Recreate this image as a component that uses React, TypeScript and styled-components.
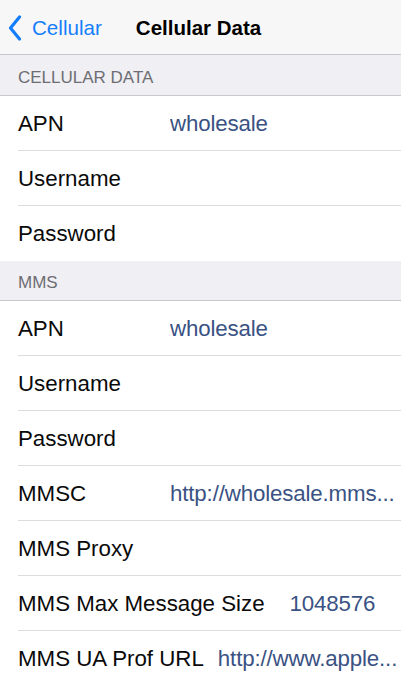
import React from "react";
import styled, { createGlobalStyle } from "styled-components";

const GlobalStyle = createGlobalStyle`
  html, body {
    margin: 0;
    padding: 0;
    background: #ffffff;
  }
  body {
    font-family: "Liberation Sans", Arial, sans-serif;
    -webkit-font-smoothing: antialiased;
  }
`;

const Screen = styled.div`
  width: 401px;
  height: 684px;
  overflow: hidden;
  background: #ffffff;
  display: flex;
  flex-direction: column;
`;

const NavBar = styled.div`
  height: 54px;
  flex-shrink: 0;
  background: #f7f7f7;
  border-bottom: 1px solid #c8c7cc;
  display: flex;
  align-items: center;
  box-sizing: content-box;
`;

const BackButton = styled.div`
  display: flex;
  align-items: center;
  color: #157efb;
  font-size: 20.6px;
  padding-left: 8px;
  gap: 10px;
  margin-top: 1px;
`;

const Title = styled.div`
  font-size: 20.5px;
  font-weight: bold;
  color: #000000;
  margin-left: 34px;
  margin-top: 1px;
`;

const SectionHeader = styled.div<{ $height: number }>`
  height: ${(p) => p.$height}px;
  flex-shrink: 0;
  background: #efeff4;
  border-bottom: 1px solid #c8c7cc;
  color: #6d6d72;
  font-size: 17px;
  padding: 5px 0 0 18px;
  display: flex;
  align-items: center;
  box-sizing: border-box;
`;

const Row = styled.div`
  height: 55px;
  flex-shrink: 0;
  display: flex;
  align-items: center;
  padding-left: 18px;
  position: relative;
  box-sizing: border-box;
  &:not(:last-child)::after {
    content: "";
    position: absolute;
    left: 18px;
    right: 0;
    bottom: 0;
    height: 1px;
    background: #dcdbe0;
  }
`;

const Label = styled.div<{ $gap: number }>`
  font-size: 22.3px;
  color: #0a0a0a;
  min-width: 152px;
  margin-right: ${(p) => p.$gap}px;
  white-space: nowrap;
  flex-shrink: 0;
`;

const Value = styled.div`
  font-size: 22.3px;
  color: #3a5283;
  white-space: nowrap;
  overflow: hidden;
  min-width: 0;
  letter-spacing: -0.15px;
`;

const Group = styled.div`
  display: flex;
  flex-direction: column;
`;

type Field = { label: string; value?: string; gap?: number };

const cellular: Field[] = [
  { label: "APN", value: "wholesale" },
  { label: "Username" },
  { label: "Password" },
];

const mms: Field[] = [
  { label: "APN", value: "wholesale" },
  { label: "Username" },
  { label: "Password" },
  { label: "MMSC", value: "http://wholesale.mms..." },
  { label: "MMS Proxy" },
  { label: "MMS Max Message Size", value: "1048576", gap: 25 },
  { label: "MMS UA Prof URL", value: "http://www.apple...", gap: 14 },
];

const Chevron = () => (
  <svg width="14" height="26" viewBox="0 0 14 26">
    <path d="M11.5 2 L2.5 13 L11.5 24" fill="none" stroke="#157efb" strokeWidth="3.2" strokeLinecap="round" strokeLinejoin="round" />
  </svg>
);

const FieldList = ({ fields }: { fields: Field[] }) => (
  <Group>
    {fields.map((f, i) => (
      <Row key={i}>
        <Label $gap={f.gap ?? 0}>{f.label}</Label>
        {f.value && <Value>{f.value}</Value>}
      </Row>
    ))}
  </Group>
);

const App: React.FC = () => (
  <Screen>
    <GlobalStyle />
    <NavBar>
      <BackButton>
        <Chevron />
        <span>Cellular</span>
      </BackButton>
      <Title>Cellular Data</Title>
    </NavBar>
    <SectionHeader $height={41}>CELLULAR DATA</SectionHeader>
    <FieldList fields={cellular} />
    <SectionHeader $height={40}>MMS</SectionHeader>
    <FieldList fields={mms} />
  </Screen>
);

export default App;
